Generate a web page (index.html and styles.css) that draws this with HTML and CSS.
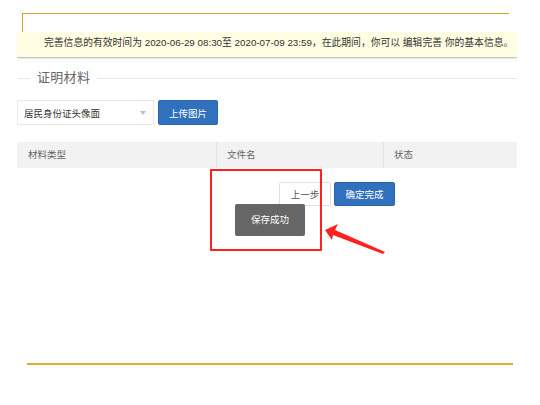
FILE: index.html
```html
<!DOCTYPE html>
<html lang="zh-CN">
<head>
<meta charset="utf-8">
<title>证明材料</title>
<link rel="stylesheet" href="styles.css">
</head>
<body>
<div class="page">
  <div class="frame"></div>
  <div class="notice">完善信息的有效时间为 2020-06-29 08:30至 2020-07-09 23:59，在此期间，你可以 编辑完善 你的基本信息。</div>

  <div class="legend">
    <span class="legend-line short"></span>
    <span class="legend-text">证明材料</span>
    <span class="legend-line long"></span>
  </div>

  <div class="upload-row">
    <div class="select">
      <span class="select-text">居民身份证头像面</span>
      <span class="caret"></span>
    </div>
    <button class="btn btn-primary">上传图片</button>
  </div>

  <div class="table-head">
    <div class="col col-type">材料类型</div>
    <div class="col col-name">文件名</div>
    <div class="col col-status">状态</div>
  </div>

  <div class="actions">
    <button class="btn btn-default">上一步</button>
    <button class="btn btn-primary btn-confirm">确定完成</button>
  </div>

  <div class="toast">保存成功</div>
  <div class="highlight"></div>
  <svg class="arrow" width="70" height="40" viewBox="0 0 70 40">
    <polygon points="0,10 13,4 10,10 60,32 58,34 8,15 7,20" fill="#ff1f1f"/>
  </svg>

  <div class="bottom-line"></div>
</div>
</body>
</html>
```

FILE: styles.css
```css
html, body {
  margin: 0;
  padding: 0;
  background: #ffffff;
}
body {
  width: 540px;
  height: 405px;
  overflow: hidden;
  font-family: "Liberation Sans", "Noto Sans CJK SC", sans-serif;
}
.page {
  position: relative;
  width: 540px;
  height: 405px;
  padding-top: 13px;
  box-sizing: border-box;
}
.frame {
  margin-left: 22px;
  width: 486px;
  height: 18px;
  border-top: 1px solid #d6a128;
  border-left: 1px solid #d6a128;
}
.notice {
  margin-left: 17px;
  width: 500px;
  height: 26px;
  box-sizing: border-box;
  padding-left: 27px;
  background: #fffee2;
  border-bottom: 1px solid #c4c4c4;
  box-shadow: 0 1px 1px rgba(0,0,0,0.08);
  font-size: 9.8px;
  line-height: 22px;
  color: #333;
  white-space: nowrap;
  overflow: hidden;
}
.legend {
  margin-top: 13px;
  margin-left: 18px;
  width: 499px;
  height: 14px;
  display: flex;
  align-items: center;
  gap: 7px;
}
.legend-line {
  height: 1px;
  background: #e8e8e8;
}
.legend-line.short { width: 12px; }
.legend-line.long { flex: 1; }
.legend-text {
  font-size: 13px;
  color: #666;
  line-height: 14px;
  letter-spacing: 0.3px;
}
.upload-row {
  margin-top: 15px;
  margin-left: 17px;
  display: flex;
  gap: 4px;
  height: 25px;
}
.select {
  width: 137px;
  height: 25px;
  box-sizing: border-box;
  border: 1px solid #e8e8e8;
  display: flex;
  align-items: center;
  justify-content: space-between;
  padding: 0 7px 0 6px;
}
.select-text {
  font-size: 9.5px;
  color: #333;
}
.caret {
  width: 0;
  height: 0;
  border-left: 3.5px solid transparent;
  border-right: 3.5px solid transparent;
  border-top: 4px solid #c0c0c0;
}
.btn {
  font-family: "Liberation Sans", "Noto Sans CJK SC", sans-serif;
  font-size: 9.5px;
  border: 1px solid transparent;
  border-radius: 2px;
  padding: 0;
  margin: 0;
  height: 25px;
  cursor: pointer;
}
.btn-primary {
  background: #3170bc;
  border-color: #2c67ae;
  color: #fff;
  width: 60px;
}
.btn-default {
  background: #fff;
  border-color: #e0e0e0;
  color: #555;
  width: 52px;
}
.table-head {
  margin-top: 17px;
  margin-left: 17px;
  width: 500px;
  height: 26px;
  background: #f2f2f2;
  display: flex;
}
.col {
  font-size: 9.5px;
  color: #666;
  line-height: 26px;
  padding-left: 11px;
  box-sizing: border-box;
}
.col-type { width: 199px; }
.col-name { width: 167px; border-left: 1px solid #e4e4e4; padding-left: 10px; }
.col-status { flex: 1; border-left: 1px solid #e4e4e4; padding-left: 10px; }
.actions {
  margin-top: 14px;
  margin-left: 279px;
  display: flex;
  gap: 3px;
  height: 24px;
}
.actions .btn { height: 24px; }
.btn-confirm { width: 61px; }
.toast {
  position: absolute;
  left: 235px;
  top: 204px;
  width: 70px;
  height: 32px;
  background: #666;
  border-radius: 2px;
  color: #fff;
  font-size: 9.5px;
  line-height: 32px;
  text-align: center;
}
.highlight {
  position: absolute;
  left: 210px;
  top: 169px;
  width: 112px;
  height: 82px;
  box-sizing: border-box;
  border: 2px solid #ff2020;
  border-radius: 1px;
}
.arrow {
  position: absolute;
  left: 325px;
  top: 220px;
}
.bottom-line {
  position: absolute;
  left: 27px;
  top: 363px;
  width: 486px;
  height: 2px;
  background: #dcae36;
}
```
